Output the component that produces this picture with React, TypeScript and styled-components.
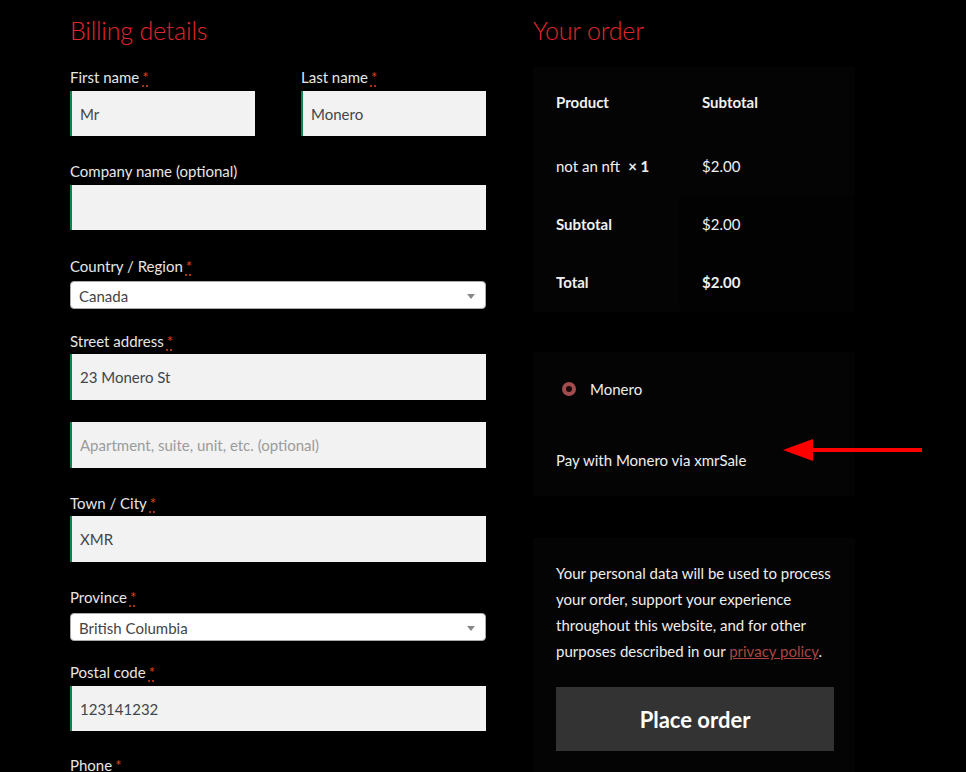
import React from "react";
import styled, { createGlobalStyle } from "styled-components";

const Global = createGlobalStyle`
  html, body { margin: 0; padding: 0; background: #000; }
  body { font-family: "Lato", "Liberation Sans", sans-serif; color: #e6e6e6; }
  * { box-sizing: border-box; }
`;

const Page = styled.div`
  display: flex;
  align-items: flex-start;
  gap: 47px;
  padding: 0 0 0 70px;
  width: 966px;
  height: 772px;
  overflow: hidden;
`;

const LeftCol = styled.div`
  width: 416px;
  display: flex;
  flex-direction: column;
  & > * { flex-shrink: 0; }
`;

const RightCol = styled.div`
  width: 322px;
  display: flex;
  flex-direction: column;
  & > * { flex-shrink: 0; }
`;

const Heading = styled.h3`
  margin: 14px 0 0 0;
  height: 50px;
  line-height: 32px;
  font-size: 25px;
  letter-spacing: -0.2px;
  font-weight: 300;
  color: #e3262e;
`;

const Row = styled.div`
  display: flex;
  gap: 46px;
`;

const Field = styled.div<{ $mb: number; $gap?: number; $w?: number }>`
  display: flex;
  flex-direction: column;
  gap: ${(p) => p.$gap ?? 1}px;
  margin-bottom: ${(p) => p.$mb}px;
  width: ${(p) => (p.$w ? `${p.$w}px` : "100%")};
`;

const Label = styled.label`
  font-size: 15px;
  line-height: 26px;
  height: 26px;
  color: #e6e6e6;
`;

const Req = styled.abbr`
  color: #e2401c;
  text-decoration: underline dotted;
  text-underline-offset: 3px;
  margin-left: 3px;
`;

const Input = styled.div<{ $h?: number; $placeholder?: boolean }>`
  height: ${(p) => p.$h ?? 45}px;
  background: #f2f2f2;
  box-shadow: inset 2px 0 0 #0f834d;
  display: flex;
  align-items: center;
  padding-left: 10px;
  font-size: 15px;
  color: ${(p) => (p.$placeholder ? "#9b9b9b" : "#43454b")};
`;

const Select = styled.div`
  height: 28px;
  background: #fff;
  border: 1px solid #aaa;
  border-radius: 4px;
  display: flex;
  align-items: center;
  justify-content: space-between;
  padding: 2px 8px 0 8px;
  font-size: 15px;
  color: #444;
`;

const Caret = styled.span`
  width: 0;
  height: 0;
  border-left: 4px solid transparent;
  border-right: 4px solid transparent;
  border-top: 5px solid #888;
  margin-right: 2px;
`;

const Box = styled.div<{ $h: number; $mb: number; $mt?: number }>`
  background: #040404;
  height: ${(p) => p.$h}px;
  margin-top: ${(p) => p.$mt ?? 0}px;
  margin-bottom: ${(p) => p.$mb}px;
  position: relative;
`;

const Table = styled.div`
  display: grid;
  grid-template-columns: 146px 176px;
  grid-template-rows: 70px 58px 58px 58px;
  font-size: 15px;
  color: #f0f0f0;
`;

const Cell = styled.div<{ $bold?: boolean; $dark?: boolean }>`
  display: flex;
  align-items: center;
  padding: 0 0 0 23px;
  font-weight: ${(p) => (p.$bold ? 700 : 400)};
  background: ${(p) => (p.$dark ? "#020202" : "transparent")};
`;

const Qty = styled.strong`
  margin-left: 8px;
  font-weight: 700;
`;

const PayBox = styled.div`
  padding: 28px 0 0 23px;
  font-size: 15px;
  color: #eee;
`;

const RadioLine = styled.div`
  display: flex;
  align-items: center;
  gap: 14px;
  height: 18px;
  padding-left: 6px;
`;

const Radio = styled.span`
  width: 14px;
  height: 14px;
  border-radius: 50%;
  border: 4px solid #a24b4f;
  background: #1a0a0a;
`;

const PayDesc = styled.p`
  margin: 50px 0 0 0;
  line-height: 24px;
`;

const Arrow = styled.svg`
  position: absolute;
  left: 250px;
  top: 87px;
`;

const Privacy = styled.div`
  padding: 22px 0 0 23px;
  font-size: 15px;
  line-height: 26px;
  color: #eee;
`;

const Link = styled.a`
  color: #a94442;
  text-decoration: underline;
`;

const Button = styled.button`
  margin-top: 23px;
  width: 278px;
  height: 64px;
  border: none;
  background: #333333;
  color: #fff;
  font-family: inherit;
  font-size: 22px;
  font-weight: 700;
`;

const Lbl = ({ text, req }: { text: string; req?: boolean }) => (
  <Label>
    {text}
    {req && <Req title="required">*</Req>}
  </Label>
);

export default function App() {
  return (
    <>
      <Global />
      <Page>
        <LeftCol>
          <Heading>Billing details</Heading>
          <Row>
            <Field $mb={22} $w={185}>
              <Lbl text="First name" req />
              <Input>Mr</Input>
            </Field>
            <Field $mb={22} $w={185}>
              <Lbl text="Last name" req />
              <Input>Monero</Input>
            </Field>
          </Row>
          <Field $mb={23}>
            <Lbl text="Company name (optional)" />
            <Input />
          </Field>
          <Field $mb={19} $gap={2}>
            <Lbl text="Country / Region" req />
            <Select>
              Canada
              <Caret />
            </Select>
          </Field>
          <Field $mb={22} $gap={0}>
            <Lbl text="Street address" req />
            <Input $h={46}>23 Monero St</Input>
          </Field>
          <Field $mb={22}>
            <Input $h={46} $placeholder>
              Apartment, suite, unit, etc. (optional)
            </Input>
          </Field>
          <Field $mb={22} $gap={0}>
            <Lbl text="Town / City" req />
            <Input $h={46}>XMR</Input>
          </Field>
          <Field $mb={18} $gap={3}>
            <Lbl text="Province" req />
            <Select>
              British Columbia
              <Caret />
            </Select>
          </Field>
          <Field $mb={21} $gap={1}>
            <Lbl text="Postal code" req />
            <Input>123141232</Input>
          </Field>
          <Field $mb={0}>
            <Lbl text="Phone" req />
          </Field>
        </LeftCol>
        <RightCol>
          <Heading>Your order</Heading>
          <Box $h={245} $mb={40} $mt={3}>
            <Table>
              <Cell $bold>Product</Cell>
              <Cell $bold>Subtotal</Cell>
              <Cell>
                not an nft <Qty>× 1</Qty>
              </Cell>
              <Cell>$2.00</Cell>
              <Cell $bold>Subtotal</Cell>
              <Cell $dark>$2.00</Cell>
              <Cell $bold>Total</Cell>
              <Cell $dark $bold>
                $2.00
              </Cell>
            </Table>
          </Box>
          <Box $h={144} $mb={42}>
            <PayBox>
              <RadioLine>
                <Radio />
                Monero
              </RadioLine>
              <PayDesc>Pay with Monero via xmrSale</PayDesc>
            </PayBox>
            <Arrow width="140" height="22" viewBox="0 0 140 22">
              <polygon points="0,11 30,0 30,22" fill="#ff0000" />
              <rect x="28" y="9" width="111" height="4" fill="#ff0000" />
            </Arrow>
          </Box>
          <Box $h={240} $mb={0}>
            <Privacy>
              Your personal data will be used to process
              <br />
              your order, support your experience
              <br />
              throughout this website, and for other
              <br />
              purposes described in our <Link href="#">privacy policy</Link>.
              <br />
              <Button>Place order</Button>
            </Privacy>
          </Box>
        </RightCol>
      </Page>
    </>
  );
}
